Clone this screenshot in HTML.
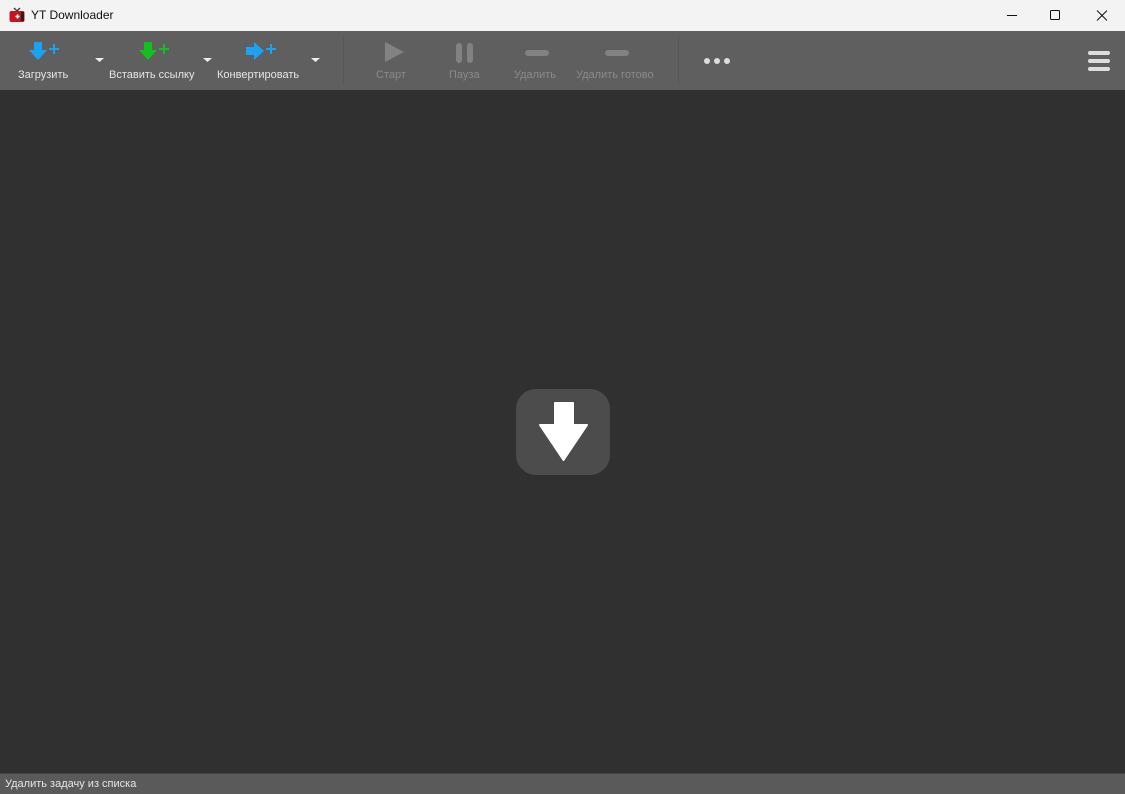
<!DOCTYPE html>
<html><head><meta charset="utf-8"><style>
*{margin:0;padding:0;box-sizing:border-box}
body{width:1125px;height:794px;overflow:hidden;background:#303030;font-family:"Liberation Sans",sans-serif;position:relative}
.title{position:absolute;left:0;top:0;width:1125px;height:31px;background:#f3f3f3}
.title span{position:absolute;left:31px;top:8px;font-size:12px;color:#111}
.tb{position:absolute;left:0;top:31px;width:1125px;height:59px;background:#5f5f5f}
.lbl{position:absolute;top:38px;font-size:11px;color:#e6e6e6;white-space:nowrap}
.dis{color:#8a8a8a}
.sep{position:absolute;top:4px;width:1px;height:50px;background:#575757}
.status{position:absolute;left:0;top:773px;width:1125px;height:21px;background:#5a5a5a;border-top:1px solid #444}
.status span{position:absolute;left:5px;top:4px;font-size:11px;color:#e6e6e6}
</style></head><body>
<div class="title">
<svg style="position:absolute;left:9px;top:7px" width="16" height="16" viewBox="0 0 16 16"><path d="M5 1l3 3 3-3" stroke="#333" fill="none" stroke-width="1.3"/><rect x="0.5" y="4" width="15" height="11" rx="2" fill="#c8141e"/><rect x="12" y="5" width="3" height="9" fill="#222"/><path d="M6.5 9.5h4M8.5 7.5v4" stroke="#fff" stroke-width="1.6"/></svg>
<span>YT Downloader</span>
<svg style="position:absolute;left:1007px;top:10px" width="100" height="12"><path d="M0 5.5h10" stroke="#111"/><rect x="43.5" y="0.5" width="9" height="9" rx="1" fill="none" stroke="#111"/><path d="M90 0.5l10 10M100 0.5l-10 10" stroke="#111"/></svg>
</div>
<div class="tb">
<svg style="position:absolute;left:0;top:0" width="1125" height="40">
<path d="M34 11h8v8h5l-9 10-9-10h5z" fill="#1aa3f5"/><path d="M49 18h10M54 13v10" stroke="#1aa3f5" stroke-width="2"/>
<path d="M144 11h8v8h5l-9 10-9-10h5z" fill="#12c11c"/><path d="M159 18h10M164 13v10" stroke="#12c11c" stroke-width="2"/>
<path d="M246 16h8v-5l10 9-10 9v-5h-8z" fill="#1aa3f5"/><path d="M266 18h10M271 13v10" stroke="#1aa3f5" stroke-width="2"/>
<path d="M95 27h9l-4.5 4z M203 27h9l-4.5 4z M311 27h9l-4.5 4z" fill="#eee"/>
<path d="M385 11l19 10-19 10z" fill="#828282"/>
<rect x="456" y="12" width="6" height="20" rx="3" fill="#828282"/><rect x="467" y="12" width="6" height="20" rx="3" fill="#828282"/>
<rect x="525" y="19" width="24" height="6" rx="3" fill="#828282"/><rect x="605" y="19" width="24" height="6" rx="3" fill="#828282"/>
<circle cx="707" cy="30" r="3" fill="#ddd"/><circle cx="717" cy="30" r="3" fill="#ddd"/><circle cx="727" cy="30" r="3" fill="#ddd"/>
</svg>
<div class="lbl" style="left:18px">Загрузить</div>
<div class="lbl" style="left:109px">Вставить ссылку</div>
<div class="lbl" style="left:217px">Конвертировать</div>
<div class="sep" style="left:343px"></div>
<div class="lbl dis" style="left:376px">Старт</div>
<div class="lbl dis" style="left:449px">Пауза</div>
<div class="lbl dis" style="left:514px">Удалить</div>
<div class="lbl dis" style="left:576px">Удалить готово</div>
<div class="sep" style="left:678px"></div>
<svg style="position:absolute;left:1088px;top:19px" width="24" height="22"><rect x="0" y="1" width="22" height="4" rx="2" fill="#ddd"/><rect x="0" y="9" width="22" height="4" rx="2" fill="#ddd"/><rect x="0" y="17" width="22" height="4" rx="2" fill="#ddd"/></svg>
</div>
<svg style="position:absolute;left:515px;top:388px" width="96" height="88" viewBox="0 0 96 88">
<rect x="1" y="1" width="94" height="86" rx="20" fill="#4c4c4c"/>
<path d="M40 15h18v22h14l-23.5 35-23.5-35h15z" fill="#fff" stroke="#fff" stroke-width="2" stroke-linejoin="round"/>
</svg>
<div class="status"><span>Удалить задачу из списка</span></div>
</body></html>
